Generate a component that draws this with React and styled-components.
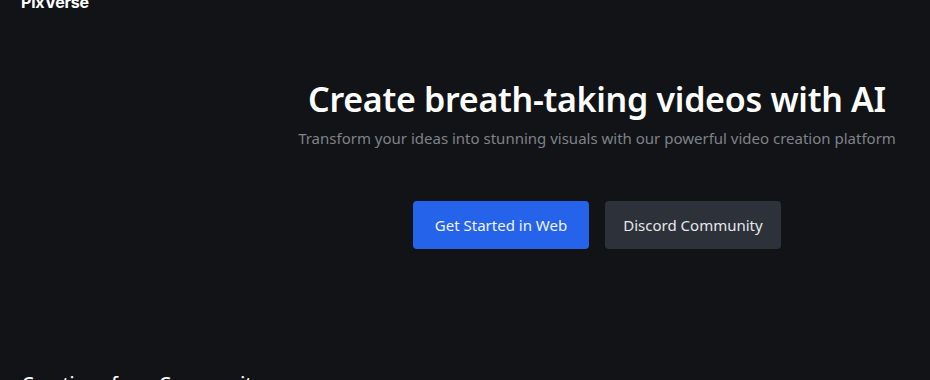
import React from 'react';
import styled, { createGlobalStyle } from 'styled-components';

const GlobalStyle = createGlobalStyle`
    body {
        margin: 0;
        background: #121316;
        font-family: "Noto Sans", "Open Sans", sans-serif;
        overflow: hidden;
    }
`;

const Page = styled.div`
    min-height: 380px;
    background: #121316;
    color: #fff;
`;

const Header = styled.header`
    height: 48px;
    padding-left: 21px;
    margin-top: -10px;
`;

const Logo = styled.div`
    font-family: Inter, "Noto Sans", sans-serif;
    font-weight: 700;
    font-size: 16px;
    line-height: 24px;
    letter-spacing: -0.2px;
`;

const Hero = styled.section`
    display: grid;
    grid-template-columns: 264px 1fr;
    height: 331px;
`;

const HeroBody = styled.div`
    display: flex;
    flex-direction: column;
    align-items: center;
    padding-top: 37px;
`;

const Title = styled.h1`
    margin: 0;
    font-size: 34px;
    font-weight: 600;
    line-height: 48px;
    letter-spacing: -0.3px;
`;

const Subtitle = styled.p`
    margin: 4px 0 0;
    font-size: 15px;
    line-height: 22px;
    color: #7f8289;
`;

const Actions = styled.div`
    display: flex;
    gap: 16px;
    margin-top: 52px;
`;

const Button = styled.button`
    width: 176px;
    height: 48px;
    border: none;
    border-radius: 4px;
    font-family: inherit;
    font-size: 15px;
    color: ${p => p.$primary ? '#eef3ff' : '#e6e8eb'};
    background: ${p => p.$primary ? '#2563eb' : '#2d3139'};
    cursor: pointer;
`;

const Community = styled.h2`
    margin: 0;
    padding-left: 22px;
    font-size: 18.5px;
    font-weight: 500;
    line-height: 28px;
`;

export default function App() {
    return (
        <Page>
            <GlobalStyle />
            <Header>
                <Logo>PixVerse</Logo>
            </Header>
            <Hero>
                <div />
                <HeroBody>
                    <Title>Create breath-taking videos with AI</Title>
                    <Subtitle>Transform your ideas into stunning visuals with our powerful video creation platform</Subtitle>
                    <Actions>
                        <Button $primary>Get Started in Web</Button>
                        <Button>Discord Community</Button>
                    </Actions>
                </HeroBody>
            </Hero>
            <Community>Creations from Community</Community>
        </Page>
    );
}
